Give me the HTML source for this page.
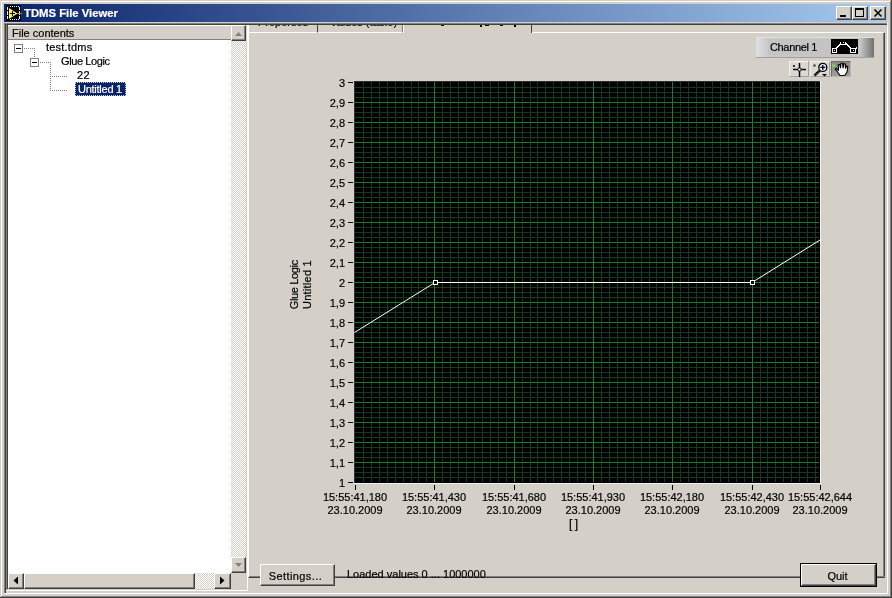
<!DOCTYPE html>
<html><head><meta charset="utf-8">
<style>
*{box-sizing:border-box}
html,body{margin:0;padding:0}
body{width:892px;height:598px;overflow:hidden;position:relative;background:#d4d0c8;font-family:"Liberation Sans",sans-serif;font-size:11px;color:#000;-webkit-text-stroke:0.2px currentColor}
.a{position:absolute}
.tk{position:absolute;background:#000}
.yl{position:absolute;left:300px;width:45px;text-align:right;line-height:14px;height:14px;font-size:11px}
.xl{position:absolute;width:80px;text-align:center;line-height:13px;font-size:11px}
.btn{position:absolute;background:#d4d0c8;border-top:1px solid #fff;border-left:1px solid #fff;border-right:1px solid #404040;border-bottom:1px solid #404040;box-shadow:inset -1px -1px 0 #808080}
.chk{background-color:#ffffff;background-image:linear-gradient(45deg,#d4d0c8 25%,transparent 25%,transparent 75%,#d4d0c8 75%),linear-gradient(45deg,#d4d0c8 25%,transparent 25%,transparent 75%,#d4d0c8 75%);background-size:2px 2px;background-position:0 0,1px 1px}
</style></head><body>
<div class="a" id="root" style="left:0;top:0;width:892px;height:598px;will-change:transform">
<!-- window frame -->
<div class="a" style="left:1px;top:1px;width:1px;height:596px;background:#fff"></div>
<div class="a" style="left:1px;top:1px;width:890px;height:1px;background:#fff"></div>
<div class="a" style="left:891px;top:0;width:1px;height:598px;background:#404040"></div>
<div class="a" style="left:890px;top:1px;width:1px;height:596px;background:#808080"></div>
<div class="a" style="left:0;top:597px;width:892px;height:1px;background:#404040"></div>
<div class="a" style="left:1px;top:596px;width:890px;height:1px;background:#808080"></div>
<!-- content sunken frame -->
<div class="a" style="left:4px;top:23px;width:884px;height:1px;background:#808080"></div>
<div class="a" style="left:4px;top:24px;width:883px;height:1px;background:#404040"></div>
<div class="a" style="left:4px;top:23px;width:1px;height:571px;background:#808080"></div>
<div class="a" style="left:5px;top:24px;width:1px;height:569px;background:#404040"></div>
<div class="a" style="left:887px;top:23px;width:1px;height:571px;background:#fff"></div>
<div class="a" style="left:4px;top:593px;width:884px;height:1px;background:#fff"></div>

<!-- title bar -->
<div class="a" style="left:4px;top:4px;width:883px;height:18px;background:linear-gradient(90deg,#0a246a,#a6caf0)"></div>
<svg class="a" style="left:6px;top:5px" width="17" height="16" viewBox="0 0 17 16" shape-rendering="crispEdges">
<rect x="0" y="0" width="15" height="16" fill="#000"/>
<path d="M1.5 2v3M1.5 6v4M1.5 11v3M13.5 2v3M13.5 6v4M13.5 11v3" stroke="#f0f0ff" stroke-width="1"/>
<path d="M4 1.5h1M6 1.5h1M8 1.5h1M10 1.5h1M12 1.5h1M4 14.5h1M6 14.5h1M8 14.5h1M10 14.5h1M12 14.5h1" stroke="#f0f0ff" stroke-width="1"/>
<path d="M3 3L11.5 8.5L3 14Z" fill="#f8f070" shape-rendering="auto"/>
<path d="M4 8.5h5M6.5 6v5" stroke="#000" stroke-width="1"/>
<path d="M11 8.5h5" stroke="#c08040" stroke-width="1"/>
</svg>
<div class="a" style="left:24px;top:5px;height:16px;line-height:16px;font-weight:bold;font-size:11.3px;color:#fff">TDMS File Viewer</div>
<!-- title buttons -->
<div class="btn" style="left:836px;top:6px;width:16px;height:14px"></div>
<div class="a" style="left:840px;top:15px;width:6px;height:2px;background:#000"></div>
<div class="btn" style="left:852px;top:6px;width:16px;height:14px"></div>
<div class="a" style="left:855px;top:8px;width:9px;height:9px;border:1px solid #000;border-top-width:2px"></div>
<div class="btn" style="left:870px;top:6px;width:16px;height:14px"></div>
<svg class="a" style="left:870px;top:6px" width="16" height="14"><path d="M4.5 3.5L11.5 10.5M11.5 3.5L4.5 10.5" stroke="#000" stroke-width="1.6"/></svg>

<!-- tree panel -->
<div class="a" style="left:6px;top:25px;width:1px;height:565px;background:#808080"></div>
<div class="a" style="left:7px;top:25px;width:1px;height:564px;background:#404040"></div>
<div class="a" style="left:247px;top:25px;width:1px;height:566px;background:#fff"></div>
<div class="a" style="left:6px;top:590px;width:242px;height:1px;background:#fff"></div>
<!-- header -->
<div class="a" style="left:8px;top:25px;width:223px;height:15px;background:#d4d0c8;border-top:1px solid #fff;border-bottom:1px solid #808080"></div>
<div class="a" style="left:12px;top:27px;line-height:13px">File contents</div>
<!-- tree area -->
<div class="a" style="left:8px;top:40px;width:223px;height:533px;background:#fff"></div>
<!-- vertical scrollbar -->
<div class="a chk" style="left:231px;top:41px;width:15px;height:516px"></div>
<div class="btn" style="left:231px;top:25px;width:15px;height:16px"></div>
<svg class="a" style="left:231px;top:25px" width="15" height="16"><path d="M4 11h7l-3.5-4z" fill="#808080"/></svg>
<div class="btn" style="left:231px;top:557px;width:15px;height:16px"></div>
<svg class="a" style="left:231px;top:557px" width="15" height="16"><path d="M4 6h7l-3.5 4z" fill="#808080"/></svg>
<!-- horizontal scrollbar -->
<div class="a chk" style="left:8px;top:573px;width:223px;height:16px"></div>
<div class="btn" style="left:8px;top:573px;width:16px;height:16px"></div>
<svg class="a" style="left:8px;top:573px" width="16" height="16"><path d="M10 3.5v8l-4.5-4z" fill="#000"/></svg>
<div class="btn" style="left:24px;top:573px;width:171px;height:16px"></div>
<div class="btn" style="left:214px;top:573px;width:17px;height:16px"></div>
<svg class="a" style="left:214px;top:573px" width="17" height="16"><path d="M6 3.5v8l4.5-4z" fill="#000"/></svg>
<div class="a" style="left:231px;top:573px;width:15px;height:16px;background:#d4d0c8"></div>

<!-- tree items -->
<div class="a" style="left:14px;top:44px;width:9px;height:9px;border:1px solid #808080;background:#fff"></div>
<div class="a" style="left:16px;top:48px;width:5px;height:1px;background:#000"></div>
<div class="a" style="left:30px;top:58px;width:9px;height:9px;border:1px solid #808080;background:#fff"></div>
<div class="a" style="left:32px;top:62px;width:5px;height:1px;background:#000"></div>
<svg class="a" style="left:8px;top:40px" width="80" height="60">
<g fill="#808080">
<rect x="16" y="8" width="1" height="1"/><rect x="18" y="8" width="1" height="1"/><rect x="20" y="8" width="1" height="1"/><rect x="22" y="8" width="1" height="1"/><rect x="24" y="8" width="1" height="1"/><rect x="26" y="8" width="1" height="1"/>
<rect x="26" y="10" width="1" height="1"/><rect x="26" y="12" width="1" height="1"/><rect x="26" y="14" width="1" height="1"/><rect x="26" y="16" width="1" height="1"/>
<rect x="32" y="22" width="1" height="1"/><rect x="34" y="22" width="1" height="1"/><rect x="36" y="22" width="1" height="1"/><rect x="38" y="22" width="1" height="1"/><rect x="40" y="22" width="1" height="1"/><rect x="42" y="22" width="1" height="1"/>
<rect x="42" y="24" width="1" height="1"/><rect x="42" y="26" width="1" height="1"/><rect x="42" y="28" width="1" height="1"/><rect x="42" y="30" width="1" height="1"/><rect x="42" y="32" width="1" height="1"/><rect x="42" y="34" width="1" height="1"/><rect x="42" y="36" width="1" height="1"/><rect x="42" y="38" width="1" height="1"/><rect x="42" y="40" width="1" height="1"/><rect x="42" y="42" width="1" height="1"/><rect x="42" y="44" width="1" height="1"/><rect x="42" y="46" width="1" height="1"/><rect x="42" y="48" width="1" height="1"/><rect x="42" y="50" width="1" height="1"/>
<rect x="44" y="36" width="1" height="1"/><rect x="46" y="36" width="1" height="1"/><rect x="48" y="36" width="1" height="1"/><rect x="50" y="36" width="1" height="1"/><rect x="52" y="36" width="1" height="1"/><rect x="54" y="36" width="1" height="1"/><rect x="56" y="36" width="1" height="1"/><rect x="58" y="36" width="1" height="1"/>
<rect x="44" y="50" width="1" height="1"/><rect x="46" y="50" width="1" height="1"/><rect x="48" y="50" width="1" height="1"/><rect x="50" y="50" width="1" height="1"/><rect x="52" y="50" width="1" height="1"/><rect x="54" y="50" width="1" height="1"/><rect x="56" y="50" width="1" height="1"/><rect x="58" y="50" width="1" height="1"/>
</g></svg>
<div class="a" style="left:46px;top:41px;line-height:13px;letter-spacing:0.2px">test.tdms</div>
<div class="a" style="left:61px;top:55px;line-height:13px;letter-spacing:-0.4px">Glue Logic</div>
<div class="a" style="left:77px;top:69px;line-height:13px;letter-spacing:0.5px">22</div>
<div class="a" style="left:75px;top:82px;width:51px;height:14px;background:#0a246a;outline:1px dotted #d4d0c8;outline-offset:-1px"></div>
<div class="a" style="left:78px;top:83px;line-height:13px;color:#fff;letter-spacing:-0.25px">Untitled 1</div>

<!-- tab control -->
<div class="a" style="left:248px;top:32px;width:637px;height:546px;border-left:1px solid #fff;border-top:1px solid #fff;border-right:1px solid #404040;border-bottom:1px solid #404040;box-shadow:inset -1px -1px 0 #808080"></div>
<!-- tabs -->
<div class="a" style="left:248px;top:25px;width:70px;height:8px;border-left:1px solid #fff;border-right:1px solid #404040;border-bottom:1px solid #fff;background:#d4d0c8"></div>
<div class="a" style="left:318px;top:25px;width:85px;height:8px;border-right:1px solid #808080;border-bottom:1px solid #fff;background:#d4d0c8"></div>
<div class="a" style="left:403px;top:25px;width:129px;height:8px;border-left:1px solid #fff;border-right:1px solid #404040;background:#d4d0c8"></div>
<div class="a" style="left:250px;top:25px;width:280px;height:3px;overflow:hidden">
<div class="a" style="left:8px;top:-8px;line-height:11px;white-space:nowrap">Properties</div>
<div class="a" style="left:80px;top:-8px;line-height:11px;white-space:nowrap">Values (table)</div>
</div>
<div class="a" style="left:441px;top:25px;width:3px;height:1px;background:#000"></div>
<div class="a" style="left:480px;top:25px;width:2px;height:2px;background:#000"></div>
<div class="a" style="left:485px;top:25px;width:4px;height:1px;background:#000"></div>
<div class="a" style="left:500px;top:25px;width:3px;height:1px;background:#000"></div>
<div class="a" style="left:514px;top:25px;width:2px;height:2px;background:#000"></div>

<!-- legend -->
<div class="a" style="left:756px;top:37px;width:118px;height:21px;background:linear-gradient(90deg,#dfe1e4 0px,#c8c8c8 12px,#c4c4c4 102px,#c8c8c8 104px,#707070 118px);border-bottom:1px solid #a0a0a0;border-top:1px solid #e0e0e0"></div>
<div class="a" style="left:768px;top:39px;width:63px;height:16px;background:#c4c4c4"></div>
<div class="a" style="left:770px;top:41px;line-height:13px;font-size:11px;letter-spacing:-0.35px">Channel 1</div>
<svg class="a" style="left:831px;top:39px" width="27" height="15" viewBox="0 0 27 15" shape-rendering="crispEdges">
<rect width="27" height="15" fill="#000"/>
<path d="M4 9h1v-1h1v-1h1v-1h1v-1h1v-1h1" stroke="#fff" fill="none"/>
<path d="M14 4h1v1h1v1h1v1h1v1h1v1h1" stroke="#fff" fill="none"/>
<path d="M24 9h1v-1h1" stroke="#fff" fill="none"/>
<path d="M1.5 9.5h4v4h-4z" stroke="#fff" fill="none"/>
<path d="M9.5 2.5v3h5v-3" stroke="#fff" fill="none"/>
<path d="M19.5 9.5h5v4h-5z" stroke="#fff" fill="none"/>
<rect x="3" y="11" width="1" height="1" fill="#fff"/>
<rect x="12" y="3" width="1" height="1" fill="#fff"/>
<rect x="22" y="11" width="1" height="1" fill="#fff"/>
</svg>

<!-- palette buttons -->
<div class="a" style="left:789px;top:61px;width:20px;height:16px;background:#dcd9d2;border-top:1px solid #f0f0f0;border-left:1px solid #f0f0f0;border-right:1px solid #a0a0a0;border-bottom:1px solid #a0a0a0"></div>
<div class="a" style="left:810px;top:61px;width:20px;height:16px;background:#dcd9d2;border-top:1px solid #f0f0f0;border-left:1px solid #f0f0f0;border-right:1px solid #a0a0a0;border-bottom:1px solid #a0a0a0"></div>
<div class="a" style="left:831px;top:61px;width:20px;height:16px;background:linear-gradient(180deg,#8c8a86,#a09c96);border-top:1px solid #6a6a6a;border-left:1px solid #6a6a6a;border-right:1px solid #b8b8b8;border-bottom:1px solid #b8b8b8"></div>
<svg class="a" style="left:789px;top:61px" width="62" height="16">
<rect x="4" y="4" width="2" height="2" fill="#383838"/>
<path d="M4 8.5h13M10.5 2v14" stroke="#000" stroke-width="1.5"/>
<circle cx="10.5" cy="8.5" r="1.6" fill="#fff" stroke="#000" stroke-width="1"/>
<circle cx="25.5" cy="4.5" r="1.3" fill="#4a4a30"/>
<circle cx="33.8" cy="6.4" r="4" fill="#eeeeff" stroke="#000" stroke-width="1.3"/>
<path d="M31.3 6.4h5M33.8 3.9v5" stroke="#000" stroke-width="1.3"/>
<path d="M30.8 9.6L25.5 14.5" stroke="#000" stroke-width="2.4"/>
<path d="M30 10.5L26.5 14" stroke="#fff" stroke-width="0.6" stroke-dasharray="1 1"/>
<path d="M33 13h5l-2.5 2.5z" fill="#000"/>
<circle cx="44.5" cy="4.5" r="1.6" fill="#70e050"/>
<path d="M48 10 L46.2 8.2 L47.2 7.2 L49.5 9 L49.3 3.6 L50.8 3.3 L51.5 7.2 L52 2.3 L53.6 2.3 L54 7.2 L55 2.8 L56.5 3.2 L56.4 7.6 L57.6 5 L58.8 5.5 L58 11 L55.8 14.5 L51 14.5 Z" fill="#fff" stroke="#000" stroke-width="1.1"/>
</svg>

<!-- graph -->
<svg class="a" style="left:0;top:0" width="892" height="598">
<rect x="354" y="81" width="466" height="402" fill="#000"/>
<rect x="354" y="81" width="466" height="1" fill="#303030"/>
<rect x="354" y="81" width="1" height="402" fill="#303030"/>
<rect x="820" y="81" width="1" height="403" fill="#f0f0f0"/>
<rect x="354" y="483" width="467" height="1" fill="#f0f0f0"/>
<rect x="355" y="87" width="464" height="1" fill="#123d1a"/>
<rect x="355" y="92" width="464" height="1" fill="#123d1a"/>
<rect x="355" y="97" width="464" height="1" fill="#123d1a"/>
<rect x="355" y="107" width="464" height="1" fill="#123d1a"/>
<rect x="355" y="112" width="464" height="1" fill="#123d1a"/>
<rect x="355" y="117" width="464" height="1" fill="#123d1a"/>
<rect x="355" y="127" width="464" height="1" fill="#123d1a"/>
<rect x="355" y="132" width="464" height="1" fill="#123d1a"/>
<rect x="355" y="137" width="464" height="1" fill="#123d1a"/>
<rect x="355" y="147" width="464" height="1" fill="#123d1a"/>
<rect x="355" y="152" width="464" height="1" fill="#123d1a"/>
<rect x="355" y="157" width="464" height="1" fill="#123d1a"/>
<rect x="355" y="167" width="464" height="1" fill="#123d1a"/>
<rect x="355" y="172" width="464" height="1" fill="#123d1a"/>
<rect x="355" y="177" width="464" height="1" fill="#123d1a"/>
<rect x="355" y="187" width="464" height="1" fill="#123d1a"/>
<rect x="355" y="192" width="464" height="1" fill="#123d1a"/>
<rect x="355" y="197" width="464" height="1" fill="#123d1a"/>
<rect x="355" y="207" width="464" height="1" fill="#123d1a"/>
<rect x="355" y="212" width="464" height="1" fill="#123d1a"/>
<rect x="355" y="217" width="464" height="1" fill="#123d1a"/>
<rect x="355" y="227" width="464" height="1" fill="#123d1a"/>
<rect x="355" y="232" width="464" height="1" fill="#123d1a"/>
<rect x="355" y="237" width="464" height="1" fill="#123d1a"/>
<rect x="355" y="247" width="464" height="1" fill="#123d1a"/>
<rect x="355" y="252" width="464" height="1" fill="#123d1a"/>
<rect x="355" y="257" width="464" height="1" fill="#123d1a"/>
<rect x="355" y="267" width="464" height="1" fill="#123d1a"/>
<rect x="355" y="272" width="464" height="1" fill="#123d1a"/>
<rect x="355" y="277" width="464" height="1" fill="#123d1a"/>
<rect x="355" y="287" width="464" height="1" fill="#123d1a"/>
<rect x="355" y="292" width="464" height="1" fill="#123d1a"/>
<rect x="355" y="297" width="464" height="1" fill="#123d1a"/>
<rect x="355" y="307" width="464" height="1" fill="#123d1a"/>
<rect x="355" y="312" width="464" height="1" fill="#123d1a"/>
<rect x="355" y="317" width="464" height="1" fill="#123d1a"/>
<rect x="355" y="327" width="464" height="1" fill="#123d1a"/>
<rect x="355" y="332" width="464" height="1" fill="#123d1a"/>
<rect x="355" y="337" width="464" height="1" fill="#123d1a"/>
<rect x="355" y="347" width="464" height="1" fill="#123d1a"/>
<rect x="355" y="352" width="464" height="1" fill="#123d1a"/>
<rect x="355" y="357" width="464" height="1" fill="#123d1a"/>
<rect x="355" y="367" width="464" height="1" fill="#123d1a"/>
<rect x="355" y="372" width="464" height="1" fill="#123d1a"/>
<rect x="355" y="377" width="464" height="1" fill="#123d1a"/>
<rect x="355" y="387" width="464" height="1" fill="#123d1a"/>
<rect x="355" y="392" width="464" height="1" fill="#123d1a"/>
<rect x="355" y="397" width="464" height="1" fill="#123d1a"/>
<rect x="355" y="407" width="464" height="1" fill="#123d1a"/>
<rect x="355" y="412" width="464" height="1" fill="#123d1a"/>
<rect x="355" y="417" width="464" height="1" fill="#123d1a"/>
<rect x="355" y="427" width="464" height="1" fill="#123d1a"/>
<rect x="355" y="432" width="464" height="1" fill="#123d1a"/>
<rect x="355" y="437" width="464" height="1" fill="#123d1a"/>
<rect x="355" y="447" width="464" height="1" fill="#123d1a"/>
<rect x="355" y="452" width="464" height="1" fill="#123d1a"/>
<rect x="355" y="457" width="464" height="1" fill="#123d1a"/>
<rect x="355" y="467" width="464" height="1" fill="#123d1a"/>
<rect x="355" y="472" width="464" height="1" fill="#123d1a"/>
<rect x="355" y="477" width="464" height="1" fill="#123d1a"/>
<rect x="363" y="82" width="1" height="400" fill="#153a1d"/>
<rect x="371" y="82" width="1" height="400" fill="#153a1d"/>
<rect x="379" y="82" width="1" height="400" fill="#153a1d"/>
<rect x="387" y="82" width="1" height="400" fill="#153a1d"/>
<rect x="395" y="82" width="1" height="400" fill="#153a1d"/>
<rect x="403" y="82" width="1" height="400" fill="#153a1d"/>
<rect x="411" y="82" width="1" height="400" fill="#153a1d"/>
<rect x="418" y="82" width="1" height="400" fill="#153a1d"/>
<rect x="426" y="82" width="1" height="400" fill="#153a1d"/>
<rect x="442" y="82" width="1" height="400" fill="#153a1d"/>
<rect x="450" y="82" width="1" height="400" fill="#153a1d"/>
<rect x="458" y="82" width="1" height="400" fill="#153a1d"/>
<rect x="466" y="82" width="1" height="400" fill="#153a1d"/>
<rect x="474" y="82" width="1" height="400" fill="#153a1d"/>
<rect x="482" y="82" width="1" height="400" fill="#153a1d"/>
<rect x="490" y="82" width="1" height="400" fill="#153a1d"/>
<rect x="498" y="82" width="1" height="400" fill="#153a1d"/>
<rect x="506" y="82" width="1" height="400" fill="#153a1d"/>
<rect x="522" y="82" width="1" height="400" fill="#153a1d"/>
<rect x="530" y="82" width="1" height="400" fill="#153a1d"/>
<rect x="537" y="82" width="1" height="400" fill="#153a1d"/>
<rect x="545" y="82" width="1" height="400" fill="#153a1d"/>
<rect x="553" y="82" width="1" height="400" fill="#153a1d"/>
<rect x="561" y="82" width="1" height="400" fill="#153a1d"/>
<rect x="569" y="82" width="1" height="400" fill="#153a1d"/>
<rect x="577" y="82" width="1" height="400" fill="#153a1d"/>
<rect x="585" y="82" width="1" height="400" fill="#153a1d"/>
<rect x="601" y="82" width="1" height="400" fill="#153a1d"/>
<rect x="609" y="82" width="1" height="400" fill="#153a1d"/>
<rect x="617" y="82" width="1" height="400" fill="#153a1d"/>
<rect x="625" y="82" width="1" height="400" fill="#153a1d"/>
<rect x="633" y="82" width="1" height="400" fill="#153a1d"/>
<rect x="641" y="82" width="1" height="400" fill="#153a1d"/>
<rect x="649" y="82" width="1" height="400" fill="#153a1d"/>
<rect x="656" y="82" width="1" height="400" fill="#153a1d"/>
<rect x="664" y="82" width="1" height="400" fill="#153a1d"/>
<rect x="680" y="82" width="1" height="400" fill="#153a1d"/>
<rect x="688" y="82" width="1" height="400" fill="#153a1d"/>
<rect x="696" y="82" width="1" height="400" fill="#153a1d"/>
<rect x="704" y="82" width="1" height="400" fill="#153a1d"/>
<rect x="712" y="82" width="1" height="400" fill="#153a1d"/>
<rect x="720" y="82" width="1" height="400" fill="#153a1d"/>
<rect x="728" y="82" width="1" height="400" fill="#153a1d"/>
<rect x="736" y="82" width="1" height="400" fill="#153a1d"/>
<rect x="744" y="82" width="1" height="400" fill="#153a1d"/>
<rect x="760" y="82" width="1" height="400" fill="#153a1d"/>
<rect x="767" y="82" width="1" height="400" fill="#153a1d"/>
<rect x="775" y="82" width="1" height="400" fill="#153a1d"/>
<rect x="783" y="82" width="1" height="400" fill="#153a1d"/>
<rect x="791" y="82" width="1" height="400" fill="#153a1d"/>
<rect x="799" y="82" width="1" height="400" fill="#153a1d"/>
<rect x="807" y="82" width="1" height="400" fill="#153a1d"/>
<rect x="815" y="82" width="1" height="400" fill="#153a1d"/>
<rect x="355" y="102" width="464" height="1" fill="#1e7a2c"/>
<rect x="355" y="122" width="464" height="1" fill="#1e7a2c"/>
<rect x="355" y="142" width="464" height="1" fill="#1e7a2c"/>
<rect x="355" y="162" width="464" height="1" fill="#1e7a2c"/>
<rect x="355" y="182" width="464" height="1" fill="#1e7a2c"/>
<rect x="355" y="202" width="464" height="1" fill="#1e7a2c"/>
<rect x="355" y="222" width="464" height="1" fill="#1e7a2c"/>
<rect x="355" y="242" width="464" height="1" fill="#1e7a2c"/>
<rect x="355" y="262" width="464" height="1" fill="#1e7a2c"/>
<rect x="355" y="282" width="464" height="1" fill="#1e7a2c"/>
<rect x="355" y="302" width="464" height="1" fill="#1e7a2c"/>
<rect x="355" y="322" width="464" height="1" fill="#1e7a2c"/>
<rect x="355" y="342" width="464" height="1" fill="#1e7a2c"/>
<rect x="355" y="362" width="464" height="1" fill="#1e7a2c"/>
<rect x="355" y="382" width="464" height="1" fill="#1e7a2c"/>
<rect x="355" y="402" width="464" height="1" fill="#1e7a2c"/>
<rect x="355" y="422" width="464" height="1" fill="#1e7a2c"/>
<rect x="355" y="442" width="464" height="1" fill="#1e7a2c"/>
<rect x="355" y="462" width="464" height="1" fill="#1e7a2c"/>
<rect x="434" y="82" width="1" height="400" fill="#1e7a2c"/>
<rect x="514" y="82" width="1" height="400" fill="#1e7a2c"/>
<rect x="593" y="82" width="1" height="400" fill="#1e7a2c"/>
<rect x="672" y="82" width="1" height="400" fill="#1e7a2c"/>
<rect x="752" y="82" width="1" height="400" fill="#1e7a2c"/>
<polyline points="354.5,332.5 435,282.5 752,282.5 820,240" fill="none" stroke="#fff" stroke-width="1"/>
<rect x="433.5" y="280.5" width="4" height="4" fill="#000" stroke="#fff" stroke-width="1"/>
<rect x="750.5" y="280.5" width="4" height="4" fill="#000" stroke="#fff" stroke-width="1"/>
</svg>
<div class="yl" style="top:76px">3</div>
<div class="tk" style="left:348px;top:82px;width:5px;height:1px"></div>
<div class="yl" style="top:96px">2,9</div>
<div class="tk" style="left:348px;top:102px;width:5px;height:1px"></div>
<div class="yl" style="top:116px">2,8</div>
<div class="tk" style="left:348px;top:122px;width:5px;height:1px"></div>
<div class="yl" style="top:136px">2,7</div>
<div class="tk" style="left:348px;top:142px;width:5px;height:1px"></div>
<div class="yl" style="top:156px">2,6</div>
<div class="tk" style="left:348px;top:162px;width:5px;height:1px"></div>
<div class="yl" style="top:176px">2,5</div>
<div class="tk" style="left:348px;top:182px;width:5px;height:1px"></div>
<div class="yl" style="top:196px">2,4</div>
<div class="tk" style="left:348px;top:202px;width:5px;height:1px"></div>
<div class="yl" style="top:216px">2,3</div>
<div class="tk" style="left:348px;top:222px;width:5px;height:1px"></div>
<div class="yl" style="top:236px">2,2</div>
<div class="tk" style="left:348px;top:242px;width:5px;height:1px"></div>
<div class="yl" style="top:256px">2,1</div>
<div class="tk" style="left:348px;top:262px;width:5px;height:1px"></div>
<div class="yl" style="top:276px">2</div>
<div class="tk" style="left:348px;top:282px;width:5px;height:1px"></div>
<div class="yl" style="top:296px">1,9</div>
<div class="tk" style="left:348px;top:302px;width:5px;height:1px"></div>
<div class="yl" style="top:316px">1,8</div>
<div class="tk" style="left:348px;top:322px;width:5px;height:1px"></div>
<div class="yl" style="top:336px">1,7</div>
<div class="tk" style="left:348px;top:342px;width:5px;height:1px"></div>
<div class="yl" style="top:356px">1,6</div>
<div class="tk" style="left:348px;top:362px;width:5px;height:1px"></div>
<div class="yl" style="top:376px">1,5</div>
<div class="tk" style="left:348px;top:382px;width:5px;height:1px"></div>
<div class="yl" style="top:396px">1,4</div>
<div class="tk" style="left:348px;top:402px;width:5px;height:1px"></div>
<div class="yl" style="top:416px">1,3</div>
<div class="tk" style="left:348px;top:422px;width:5px;height:1px"></div>
<div class="yl" style="top:436px">1,2</div>
<div class="tk" style="left:348px;top:442px;width:5px;height:1px"></div>
<div class="yl" style="top:456px">1,1</div>
<div class="tk" style="left:348px;top:462px;width:5px;height:1px"></div>
<div class="yl" style="top:476px">1</div>
<div class="tk" style="left:348px;top:482px;width:5px;height:1px"></div>
<div class="tk" style="left:355px;top:485px;width:1px;height:5px"></div>
<div class="xl" style="left:315px;top:491px">15:55:41,180<br>23.10.2009</div>
<div class="tk" style="left:434px;top:485px;width:1px;height:5px"></div>
<div class="xl" style="left:394px;top:491px">15:55:41,430<br>23.10.2009</div>
<div class="tk" style="left:514px;top:485px;width:1px;height:5px"></div>
<div class="xl" style="left:474px;top:491px">15:55:41,680<br>23.10.2009</div>
<div class="tk" style="left:593px;top:485px;width:1px;height:5px"></div>
<div class="xl" style="left:553px;top:491px">15:55:41,930<br>23.10.2009</div>
<div class="tk" style="left:672px;top:485px;width:1px;height:5px"></div>
<div class="xl" style="left:632px;top:491px">15:55:42,180<br>23.10.2009</div>
<div class="tk" style="left:752px;top:485px;width:1px;height:5px"></div>
<div class="xl" style="left:712px;top:491px">15:55:42,430<br>23.10.2009</div>
<div class="tk" style="left:820px;top:485px;width:1px;height:5px"></div>
<div class="xl" style="left:780px;top:491px">15:55:42,644<br>23.10.2009</div>
<div class="a" style="left:288px;top:314px;width:60px;height:26px;transform:rotate(-90deg);transform-origin:0 0;white-space:nowrap;text-align:center;line-height:13px"><div style="letter-spacing:-0.35px;margin-left:-1.5px">Glue Logic</div><div style="letter-spacing:0.25px;margin-left:-1px">Untitled 1</div></div>
<div class="a" style="left:569px;top:518px;line-height:13px;letter-spacing:2.5px;font-size:12px">[]</div>

<!-- bottom controls -->
<div class="a" style="left:249px;top:576px;width:636px;height:1px;background:#808080"></div>
<div class="btn" style="left:260px;top:564px;width:75px;height:22px"></div>
<div class="a" style="left:258px;top:569px;width:75px;text-align:center;line-height:14px;letter-spacing:0.4px">Settings...</div>
<div class="a" style="left:347px;top:567px;line-height:14px">Loaded values 0 ... 1000000</div>
<div class="a" style="left:800px;top:563px;width:77px;height:24px;border:1px solid #000;background:#d4d0c8"></div>
<div class="btn" style="left:801px;top:564px;width:75px;height:22px"></div>
<div class="a" style="left:800px;top:569px;width:75px;text-align:center;line-height:14px">Quit</div>
</div>
</body></html>
